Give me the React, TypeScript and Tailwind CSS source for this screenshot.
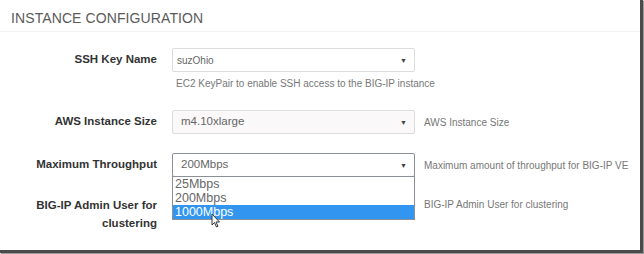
const FONT = { fontFamily: '"Liberation Sans", Arial, sans-serif' }

function Caret() {
  return <span className="text-[7px] text-[#444] leading-none">▼</span>
}

function SelectBox({
  value,
  focused = false,
  tint = false,
  small = false,
}: {
  value: string
  focused?: boolean
  tint?: boolean
  small?: boolean
}) {
  return (
    <div
      className={`flex h-[24px] w-[243px] items-center justify-between rounded-[2px] border pr-[7px] ${
        focused ? 'border-[#8a8f98]' : 'border-[#dcdcdc]'
      } ${tint ? 'bg-[#faf8f8]' : 'bg-white'} ${small ? 'pl-[4px]' : 'pl-[8px]'}`}
    >
      <span className={`${small ? 'text-[10px]' : 'text-[11.5px]'} text-[#666]`}>{value}</span>
      <Caret />
    </div>
  )
}

export default function App() {
  return (
    <div className="h-[254px] w-[644px] bg-white" style={FONT}>
      <div className="relative h-[253px] w-[643px] border-r-[3px] border-b-[3px] border-[#4a4a4a] bg-white shadow-[1px_1px_1px_#999]">
        {/* Header */}
        <div className="h-[32px] border-b border-[#f2f2f2] pl-[11px] pt-[9px]">
          <h1 className="text-[14px] leading-[18px] tracking-[0.1px] text-[#5a5a5a]">INSTANCE CONFIGURATION</h1>
        </div>

        <div className="mt-[16px] grid grid-cols-[157px_243px_1fr] gap-x-[15px] text-[11.5px]">
          {/* SSH key */}
          <div className="flex h-[24px] items-center justify-end font-bold text-[#333]">SSH Key Name</div>
          <div>
            <SelectBox value="suzOhio" small />
            <div className="mt-[4px] whitespace-nowrap pl-[4px] text-[10px] text-[#777]">
              EC2 KeyPair to enable SSH access to the BIG-IP instance
            </div>
          </div>
          <div />

          {/* Instance size */}
          <div className="mt-[19px] flex h-[24px] items-center justify-end font-bold text-[#333]">AWS Instance Size</div>
          <div className="mt-[19px]">
            <SelectBox value="m4.10xlarge" tint />
          </div>
          <div className="mt-[19px] -ml-[6px] flex h-[24px] items-center whitespace-nowrap text-[10px] text-[#777]">
            AWS Instance Size
          </div>

          {/* Throughput */}
          <div className="mt-[19px] flex h-[24px] items-center justify-end font-bold text-[#333]">Maximum Throughput</div>
          <div className="relative mt-[19px]">
            <SelectBox value="200Mbps" focused />
            <div className="absolute left-0 top-[23px] z-10 w-[243px] border border-[#8a8f98] bg-white text-[12.5px] leading-[14px] text-[#666]">
              <div className="pl-[2px]">25Mbps</div>
              <div className="pl-[2px]">200Mbps</div>
              <div className="bg-[#3296f0] pl-[2px] text-white">1000Mbps</div>
            </div>
            <svg className="absolute left-[39px] top-[60px] z-20" width="10" height="15" viewBox="0 0 10 15">
              <path d="M1 1 L1 12 L3.5 9.5 L5.5 14 L7 13.3 L5 9 L8.5 9 Z" fill="#fff" stroke="#333" strokeWidth="1" />
            </svg>
          </div>
          <div className="mt-[19px] -ml-[6px] flex h-[24px] items-center whitespace-nowrap text-[10px] text-[#777]">
            Maximum amount of throughput for BIG-IP VE
          </div>

          {/* Admin user */}
          <div className="mt-[19px] text-right font-bold leading-[18px] text-[#333]">
            BIG-IP Admin User for
            <br />
            clustering
          </div>
          <div />
          <div className="mt-[19px] -ml-[6px] whitespace-nowrap text-[10px] leading-[18px] text-[#777]">
            BIG-IP Admin User for clustering
          </div>
        </div>
      </div>
    </div>
  )
}
